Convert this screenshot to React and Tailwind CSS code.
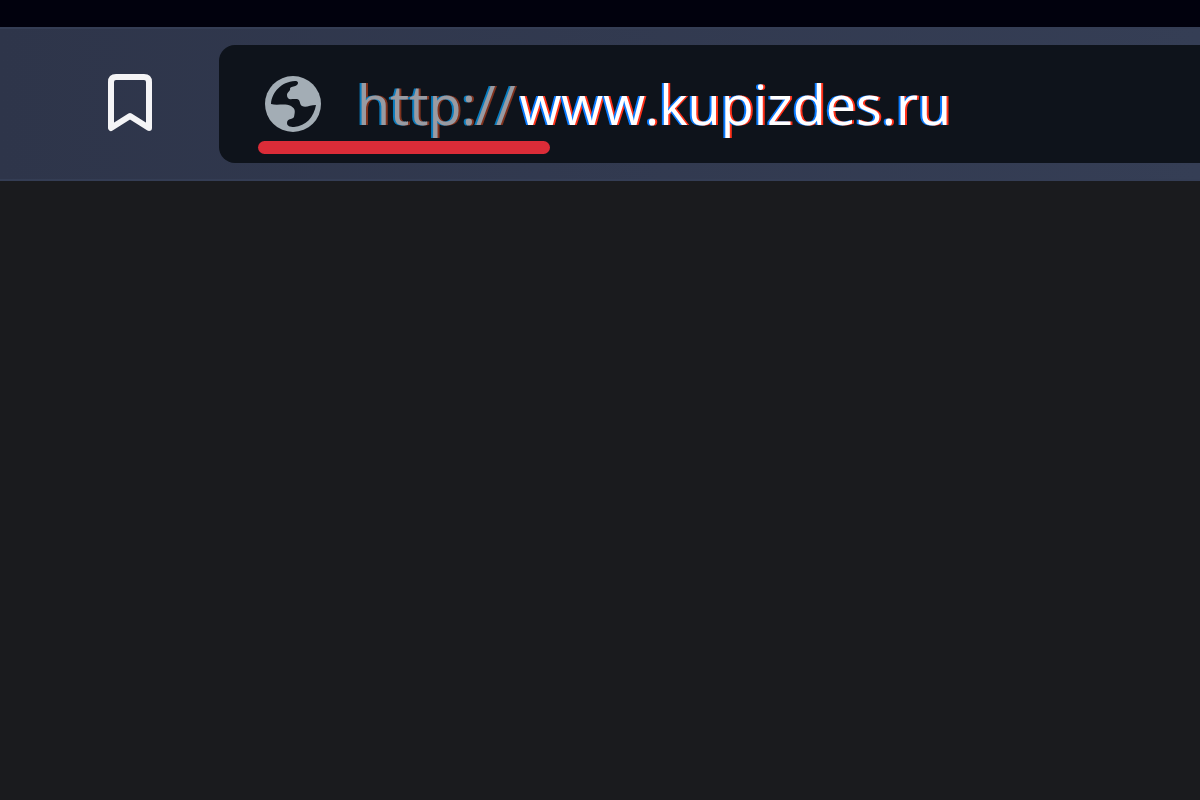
import React, { useState } from "react";

const BookmarkIcon = () => (
  <svg className="h-15 w-11" viewBox="0 0 44 60" fill="none" stroke="#f4f4f6" strokeWidth="6" strokeLinejoin="round" aria-hidden="true">
    <path d="M8 3H36Q41 3 41 8V54L22 42L3 54V8Q3 3 8 3Z" />
  </svg>
);

const GlobeIcon = () => (
  <svg className="h-14 w-14 shrink-0" viewBox="0 0 56 56" aria-hidden="true">
    <circle cx="28" cy="28" r="28" fill="#a3adb5" />
    <path
      d="M6 28C7 16 16 6 30 5C33 5 34 7 32 9C30 11 27 10 25 12C26 15 22 16 22 19C22 22 24 24 27 23H32C36 24 34 28 37 30C41 32 45 29 51 29C49 41 41 50 29 51C25 51 22 50 22 47C22 42 27 44 29 41C30 36 31 33 26 30C20 27 12 30 6 28Z"
      fill="#0e131b"
    />
  </svg>
);

const AddressBar = () => {
  const [host, setHost] = useState("www.kupizdes.ru");

  return (
    <form
      className="relative flex h-[118px] min-w-0 flex-1 items-center rounded-l-2xl bg-[#0e131b] pl-[46px] font-['Open_Sans','Noto_Sans',sans-serif] text-[54px] leading-[72px]"
      onSubmit={(e) => e.preventDefault()}
    >
      <GlobeIcon />
      <label
        htmlFor="address"
        className="ml-9 shrink-0 text-[#999ba2] [text-shadow:-2px_0_#087bbd,2px_0_#80331e]"
      >
        http://
      </label>
      <input
        id="address"
        type="text"
        value={host}
        onChange={(e) => setHost(e.target.value)}
        spellCheck={false}
        className="h-[72px] min-w-0 flex-1 bg-transparent pl-1 text-white outline-none [text-shadow:-2px_0_#0879ff,2px_0_#ff3018]"
      />
      {/* Red marker under the insecure scheme */}
      <div className="pointer-events-none absolute bottom-[9px] left-[39px] h-[13px] w-[292px] rounded-full bg-[#db2c38]" />
    </form>
  );
};

const App = () => (
  <div className="flex min-h-screen flex-col bg-[#1a1b1e]">
    <div className="h-[27px] bg-[#01010d]" />
    <header className="flex items-center border-y-2 border-[#343d54] bg-linear-to-r from-[#2e354a] to-[#353e55] py-4 pl-[108px]">
      <button type="button" aria-label="Bookmark this page" className="mr-[67px] shrink-0">
        <BookmarkIcon />
      </button>
      <AddressBar />
    </header>
    <main className="flex-1" />
  </div>
);

export default App;
